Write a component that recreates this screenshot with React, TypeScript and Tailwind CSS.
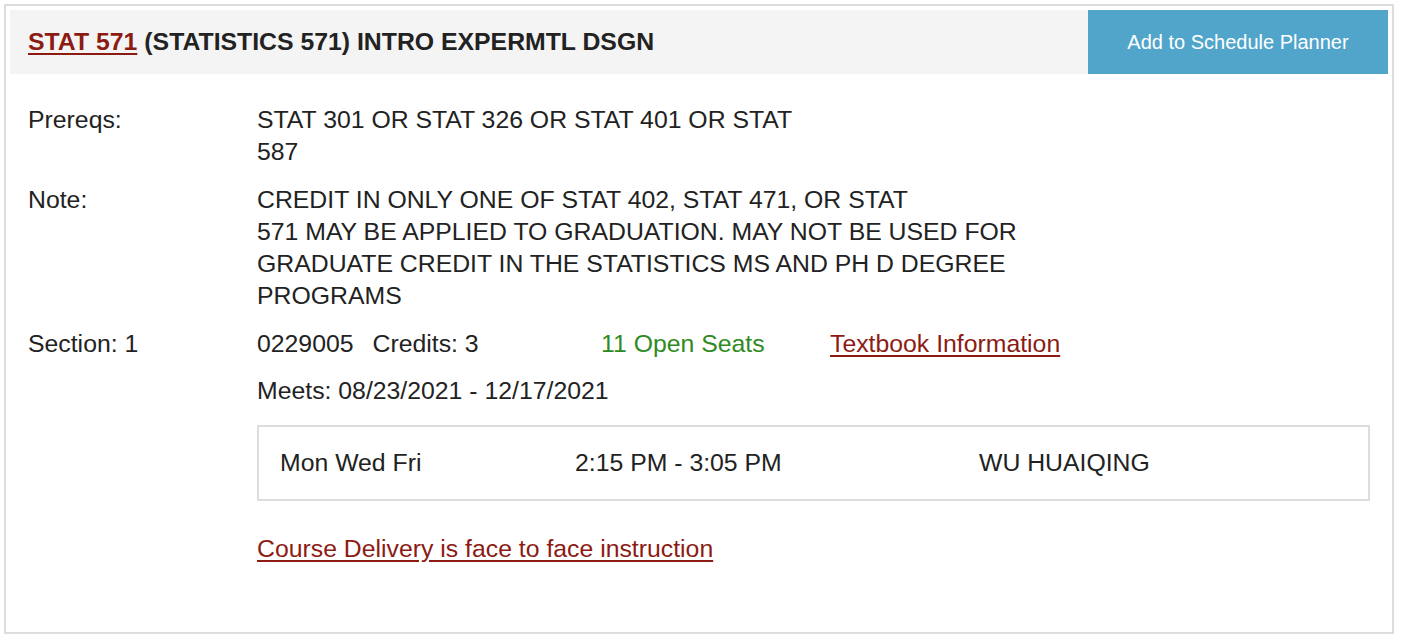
const rows = [
  {
    label: "Prereqs:",
    lines: ["STAT 301 OR STAT 326 OR STAT 401 OR STAT", "587"],
  },
  {
    label: "Note:",
    lines: [
      "CREDIT IN ONLY ONE OF STAT 402, STAT 471, OR STAT",
      "571 MAY BE APPLIED TO GRADUATION. MAY NOT BE USED FOR",
      "GRADUATE CREDIT IN THE STATISTICS MS AND PH D DEGREE",
      "PROGRAMS",
    ],
  },
];

export default function App() {
  return (
    <div className="bg-white w-[1404px] h-[642px] p-1 font-['Liberation_Sans',Arial,sans-serif] text-[#222] text-[24.8px] leading-8">
      <div className="border-2 border-[#dddddd] w-[1390px] h-[630px] p-1">
        <div className="flex h-16 bg-[#f4f4f4]">
          <h2 className="flex-1 flex items-center pl-[18px] font-bold">
            <a href="#" className="text-[#8c1b13] underline underline-offset-[3px] decoration-2">
              STAT 571
            </a>
            <span className="ml-[7px]">(STATISTICS 571) INTRO EXPERMTL DSGN</span>
          </h2>
          <button className="w-[300px] bg-[#52a5ca] text-white text-[20px]">
            Add to Schedule Planner
          </button>
        </div>

        <div className="grid grid-cols-[229px_1fr] gap-y-4 pt-[30px] px-[18px]">
          {rows.map((row) => (
            <div key={row.label} className="contents">
              <div>{row.label}</div>
              <div>
                {row.lines.map((line) => (
                  <div key={line}>{line}</div>
                ))}
              </div>
            </div>
          ))}

          <div>Section: 1</div>
          <div className="flex flex-col">
            <div className="flex">
              <span className="w-[344px]">
                0229005<span className="ml-[19px]">Credits: 3</span>
              </span>
              <span className="w-[229px] text-[#2f8a22]">11 Open Seats</span>
              <a href="#" className="text-[#8c1b13] underline underline-offset-[3px]">
                Textbook Information
              </a>
            </div>
            <div className="mt-[15px]">Meets: 08/23/2021 - 12/17/2021</div>
            <div className="mt-[18px] flex items-center h-[76px] border-2 border-[#dddddd] pl-[21px]">
              <span className="w-[295px]">Mon Wed Fri</span>
              <span className="w-[404px]">2:15 PM - 3:05 PM</span>
              <span>WU HUAIQING</span>
            </div>
            <a href="#" className="mt-8 self-start text-[#8c1b13] underline underline-offset-[3px]">
              Course Delivery is face to face instruction
            </a>
          </div>
        </div>
      </div>
    </div>
  );
}
